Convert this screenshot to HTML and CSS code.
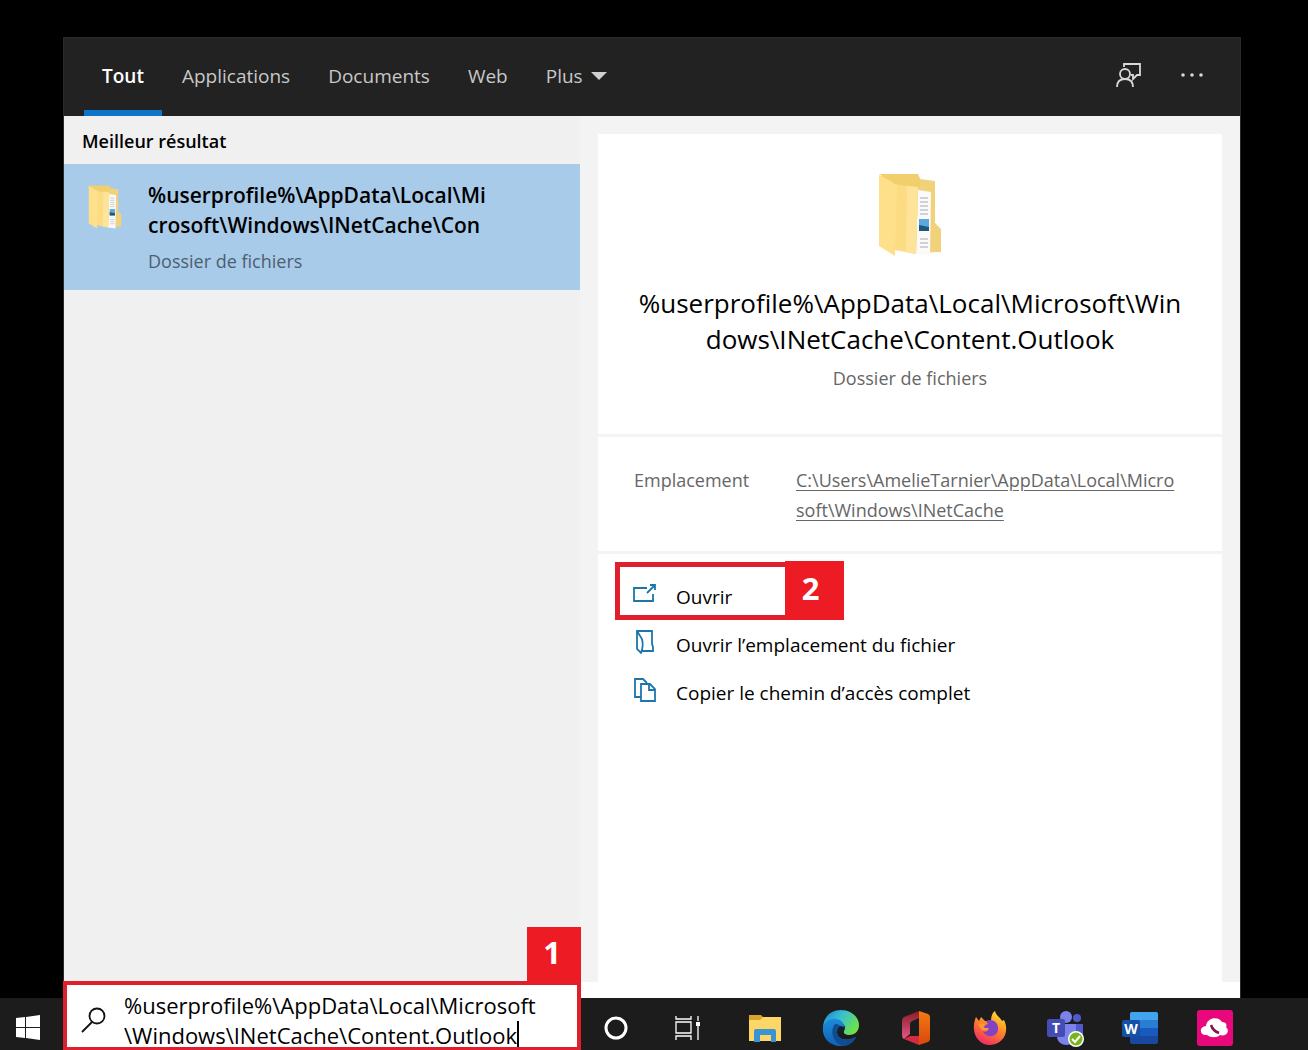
FILE: index.html
```html
<!DOCTYPE html>
<html lang="fr">
<head>
    <meta charset="UTF-8">
    <meta name="viewport" content="width=device-width, initial-scale=1.0">
    <title>Recherche Windows</title>
    <link rel="stylesheet" href="styles.css">
</head>
<body>
    <!-- Folder drawing shared by the result and the details -->
    <svg class="defs" aria-hidden="true">
        <symbol id="folder" viewBox="0 0 64 84">
            <path d="M2 3 L40 2 L42 6 L57 8 L57 50 L63 56 L63 79 L36 80 L2 72Z" fill="#f1d27a"/>
            <path d="M40 17 L53 19 L52 83 L38 81Z" fill="#fafafa"/>
            <path d="M42 25h8M42 29h8M42 33h8M42 37h8M42 41h8M42 66h8M42 70h8M42 74h8" stroke="#a5a9b0" stroke-width="1"/>
            <path d="M41 46h10v12h-10z" fill="#5aa9dd"/>
            <path d="M41 52l10 2v4h-10z" fill="#1f567f"/>
            <path d="M16 12 L40 14 L38 81 L17 77Z" fill="#fbdc83"/>
            <path d="M29 13 L40 14 L38 81 L28 79Z" fill="#fde499"/>
            <path d="M1 2 L19 11 L17 83 L1 73Z" fill="#ffe08a"/>
            <path d="M1 1 L40 1 L42 6 L42 14 L17 11Z" fill="#f2cf6d"/>
        </symbol>
    </svg>

    <main class="search-window">
        <header class="topbar">
            <nav class="tabs">
                <button class="tab active">Tout</button>
                <button class="tab">Applications</button>
                <button class="tab">Documents</button>
                <button class="tab">Web</button>
                <button class="tab">Plus <span class="arrow"></span></button>
            </nav>
            <div class="tools">
                <button class="tool" aria-label="Commentaires">
                    <svg width="26" height="26" viewBox="0 0 26 26" fill="none" stroke="#d8d8d8" stroke-width="1.8">
                        <path d="M8 5V2h16v11h-3l-4 4v-4h-2"/>
                        <circle cx="9" cy="12" r="5"/>
                        <path d="M1 25c0-5 3-8 8-8s8 3 8 8"/>
                    </svg>
                </button>
                <button class="tool" aria-label="Options">
                    <svg width="26" height="26" viewBox="0 0 26 26" fill="#d8d8d8">
                        <circle cx="4" cy="13" r="1.8"/><circle cx="13" cy="13" r="1.8"/><circle cx="22" cy="13" r="1.8"/>
                    </svg>
                </button>
            </div>
        </header>

        <div class="content">
            <section class="results">
                <h2>Meilleur résultat</h2>
                <button class="result">
                    <svg class="result-icon"><use href="#folder"/></svg>
                    <span>
                        <strong>%userprofile%\AppData\Local\Mi<br>crosoft\Windows\INetCache\Con</strong>
                        <small>Dossier de fichiers</small>
                    </span>
                </button>
            </section>

            <section class="details">
                <div class="card summary">
                    <svg class="summary-icon"><use href="#folder"/></svg>
                    <h1>%userprofile%\AppData\Local\Microsoft\Win<br>dows\INetCache\Content.Outlook</h1>
                    <p>Dossier de fichiers</p>
                </div>
                <div class="card location">
                    <span>Emplacement</span>
                    <a href="#">C:\Users\AmelieTarnier\AppData\Local\Micro<br>soft\Windows\INetCache</a>
                </div>
                <div class="card actions">
                    <button class="action">
                        <svg width="26" height="26" viewBox="0 0 26 26" fill="none" stroke="#1c76ae" stroke-width="1.8">
                            <path d="M15 6H2v13h19v-7M15 11l8-8M18 3h5v5"/>
                        </svg>
                        Ouvrir
                    </button>
                    <button class="action">
                        <svg width="26" height="26" viewBox="0 0 26 26" fill="none" stroke="#1c76ae" stroke-width="1.8">
                            <path d="M9 21h12v-4l-1-3V1H5v18l4 4c2-5 2-10 1-14L5 1"/>
                        </svg>
                        Ouvrir l’emplacement du fichier
                    </button>
                    <button class="action">
                        <svg width="26" height="26" viewBox="0 0 26 26" fill="none" stroke="#1c76ae" stroke-width="1.8">
                            <path d="M9 19H3V1h8l4 4M9 6h9l5 5v12H9zM17 6v6h6"/>
                        </svg>
                        Copier le chemin d’accès complet
                    </button>
                    <div class="callout"><span class="badge">2</span></div>
                </div>
            </section>
        </div>
    </main>

    <footer class="taskbar">
        <button class="start" aria-label="Démarrer">
            <svg width="24" height="26" viewBox="0 0 24 26" fill="#fff">
                <path d="M0 3l9-1v10H0zM10 2l14-2v12H10zM0 13h9v10l-9-1zM10 13h14v12l-14-2z"/>
            </svg>
        </button>
        <div class="searchbox">
            <svg width="26" height="26" viewBox="0 0 26 26" fill="none" stroke="#111" stroke-width="1.8">
                <circle cx="16" cy="9" r="7.5"/><path d="M11 15L1 25"/>
            </svg>
            <textarea aria-label="Rechercher" rows="2" spellcheck="false">%userprofile%\AppData\Local\Microsoft
\Windows\INetCache\Content.Outlook</textarea>
            <span class="caret"></span>
            <span class="badge">1</span>
        </div>
        <nav class="apps">
            <button aria-label="Cortana">
                <svg width="38" height="38" viewBox="0 0 38 38" fill="none">
                    <circle cx="19" cy="19" r="10" stroke="#fff" stroke-width="3"/>
                </svg>
            </button>
            <button aria-label="Affichage des tâches">
                <svg width="38" height="38" viewBox="0 0 38 38" fill="none" stroke="#fff" stroke-width="1.3">
                    <path d="M4 13h15v11H4zM4 7v3h15V7M4 31v-4h15v4M26 7v5M26 17v14"/>
                    <path d="M24 13h4v4h-4z" fill="#fff" stroke="none"/>
                </svg>
            </button>
            <button aria-label="Explorateur de fichiers">
                <svg width="38" height="38" viewBox="0 0 38 38">
                    <path d="M2 6h12l3 3h17v7H2z" fill="#dba32a"/>
                    <path d="M2 11h11l3-3h18v24H2z" fill="#fcd667"/>
                    <path d="M7 33V22q0-2 2-2h18q2 0 2 2v11h-5v-7H13v7z" fill="#3b94d2"/>
                </svg>
            </button>
            <button aria-label="Edge">
                <svg width="38" height="38" viewBox="0 0 38 38">
                    <defs>
                        <linearGradient id="edge1" x2="1" y2=".5"><stop stop-color="#1684d8"/><stop offset=".5" stop-color="#38bfd2"/><stop offset="1" stop-color="#6be04e"/></linearGradient>
                        <linearGradient id="edge2" x2="0" y2="1"><stop stop-color="#1b8ddc"/><stop offset="1" stop-color="#1260b4"/></linearGradient>
                    </defs>
                    <path d="M1 19C1 8 9 1 19 1s18 7 18 15c0 7-5 10-10 10-4 0-6-2-5-4 2-3 1-8-4-8C9 13 3 16 1 23z" fill="url(#edge1)"/>
                    <path d="M1 19C3 11 10 9 15 10c5 1 8 5 7 10-2-4-7-3-7 3 0 7 9 10 19 5-3 6-9 9-15 9C8 37 0 29 1 19z" fill="url(#edge2)"/>
                    <path d="M13 15c-5 6-3 19 8 22 6 0 11-4 13-9-10 5-19 2-19-5 0-3 2-5 4-5-2-3-4-3-6-3z" fill="#104c91"/>
                    <path d="M19 17c-3 1-4 4-3 7l6-1c-1-2 1-3 0-5z" fill="#14202b"/>
                </svg>
            </button>
            <button aria-label="Office">
                <svg width="38" height="38" viewBox="0 0 38 38">
                    <defs>
                        <linearGradient id="off1" x2="0" y2="1"><stop stop-color="#f47a12"/><stop offset="1" stop-color="#d8480c"/></linearGradient>
                        <linearGradient id="off2" x2="0" y2="1"><stop stop-color="#8c1d22"/><stop offset="1" stop-color="#e4578a"/></linearGradient>
                    </defs>
                    <path d="M5 12q0-3 2-4L22 2v7l-7 3q-2 1-2 3v10l-6 5q-2-1-2-4z" fill="url(#off2)"/>
                    <path d="M7 30l6-3h9v9z" fill="#d32c40"/>
                    <path d="M22 2l9 3q2 1 2 3v22q0 2-2 3l-9 3z" fill="url(#off1)"/>
                </svg>
            </button>
            <button aria-label="Firefox">
                <svg width="38" height="38" viewBox="0 0 38 38">
                    <defs>
                        <linearGradient id="fox" x1=".8" x2=".3" y2="1"><stop stop-color="#ffe63b"/><stop offset=".45" stop-color="#ff8a25"/><stop offset="1" stop-color="#f02866"/></linearGradient>
                    </defs>
                    <path d="M5 8l3 4 2-4 4 4 6 0c0-4 1-8 4-10 1 5 5 6 7 10l2-1c6 12-1 25-14 25S-1 22 5 8z" fill="url(#fox)"/>
                    <path d="M15 12c6-3 13 1 12 9-1 8-13 8-15 1 3 2 5 0 5-2h-4c-1-3 0-4 4-5z" fill="#8341c4"/>
                    <path d="M7 15c3-2 6 0 8 1l-3 2c2 1 3 1 6 1-1 3-4 3-7 2z" fill="#ff9830"/>
                </svg>
            </button>
            <button aria-label="Teams">
                <svg width="38" height="38" viewBox="0 0 38 38">
                    <circle cx="31" cy="9" r="4" fill="#5059c9"/><circle cx="20" cy="8" r="6" fill="#7b83eb"/>
                    <path d="M25 15h12v10c0 5-5 8-9 7z" fill="#5059c9"/>
                    <path d="M11 15h19v12c0 12-19 12-19 0z" fill="#7b83eb"/>
                    <rect x="1" y="10" width="18" height="18" rx="2" fill="#444db3"/>
                    <text x="10" y="24" class="logo-letter">T</text>
                    <circle cx="30" cy="30" r="8" fill="#fff"/><circle cx="30" cy="30" r="6.5" fill="#78b51b"/>
                    <path d="M26 30l3 3 5-6" fill="none" stroke="#fff" stroke-width="2"/>
                </svg>
            </button>
            <button aria-label="Word">
                <svg width="38" height="38" viewBox="0 0 38 38">
                    <rect x="9" y="3" width="28" height="32" rx="2" fill="#1848a0"/>
                    <path d="M9 11V5q0-2 2-2h24q2 0 2 2v6z" fill="#42a4ec"/>
                    <path d="M9 11h28v8H9z" fill="#2b7cd3"/><path d="M9 19h28v8H9z" fill="#185abd"/>
                    <rect x="1" y="11" width="18" height="17" rx="2" fill="#1450a8"/>
                    <text x="10" y="25" class="logo-letter">W</text>
                </svg>
            </button>
            <button aria-label="Téléphone cloud">
                <svg width="38" height="38" viewBox="0 0 38 38">
                    <rect x="1" y="1" width="36" height="36" rx="3" fill="#e8087c"/>
                    <path d="M11 26C3 27 3 17 10 17c1-9 13-10 16-4 5 0 5 4 4 5 5 5-1 10-6 8-3 3-9 3-13 0z" fill="#fff"/>
                    <path d="M15 16q2 6 8 8" fill="none" stroke="#7d174f" stroke-width="2.5"/>
                </svg>
            </button>
        </nav>
    </footer>
</body>
</html>
```

FILE: styles.css
```css
* {
    box-sizing: border-box;
}

body {
    margin: 0;
    min-height: 100vh;
    display: flex;
    flex-direction: column;
    background-color: #000;
    color: #000;
    font-family: "Open Sans", "Noto Sans", sans-serif;
    font-size: 19px;
    line-height: 30px;
}

h1, h2, p {
    margin: 0;
}

button {
    padding: 0;
    border: none;
    background: none;
    color: inherit;
    font: inherit;
    cursor: pointer;
}

svg {
    display: block;
    flex-shrink: 0;
}

.defs {
    position: absolute;
    width: 0;
    height: 0;
}

/* Search window */
.search-window {
    flex: 1;
    display: flex;
    flex-direction: column;
    margin: 37px 67px 0 63px;
    border: 1px solid #2b2b2b;
    border-bottom: none;
}

.topbar {
    display: flex;
    justify-content: space-between;
    height: 78px;
    padding: 0 35px 0 20px;
    background-color: #222;
}

.tabs {
    display: flex;
    gap: 2px;
}

.tab {
    display: flex;
    align-items: center;
    gap: 8px;
    padding: 6px 18px 2px;
    border-bottom: 6px solid transparent;
    color: #c8c8c8;
}

.tab.active {
    border-bottom-color: #0f74c8;
    color: #fff;
    font-weight: 600;
}

.arrow {
    border: 8px solid transparent;
    border-top-color: #d0d0d0;
    border-bottom: none;
}

.tools {
    display: flex;
    align-items: center;
    gap: 37px;
    padding-bottom: 4px;
}

.content {
    flex: 1;
    display: flex;
    background-color: #f3f3f3;
    border-bottom: 16px solid #fff;
}

/* Left side */
.results {
    flex: 0 0 516px;
    background-color: #f0f0f0;
}

.results h2 {
    padding: 10px 18px 8px;
    font-size: 18px;
    font-weight: 600;
}

.result {
    display: flex;
    gap: 26px;
    width: 100%;
    padding: 16px 24px 14px;
    background-color: #a9cbea;
    text-align: left;
}

.result-icon {
    width: 34px;
    height: 44px;
    margin-top: 5px;
}

.result strong {
    display: block;
    font-size: 21px;
    font-weight: 600;
}

.result small {
    display: block;
    margin-top: 6px;
    color: #4c5f70;
    font-size: 18px;
}

/* Right side */
.details {
    flex: 1;
    display: flex;
    flex-direction: column;
    gap: 3px;
    padding: 18px 18px 0;
}

.card {
    background-color: #fff;
}

.summary {
    display: flex;
    flex-direction: column;
    align-items: center;
    padding: 39px 18px 41px;
    text-align: center;
}

.summary-icon {
    width: 64px;
    height: 84px;
}

.summary h1 {
    margin-top: 28px;
    font-size: 26px;
    font-weight: 400;
    line-height: 36px;
}

.summary p {
    margin-top: 6px;
    color: #666;
    font-size: 18px;
}

.location {
    display: flex;
    padding: 28px 36px 26px;
    color: #666;
    font-size: 18px;
}

.location span {
    width: 162px;
}

.location a {
    color: inherit;
    text-underline-offset: 3px;
}

.actions {
    position: relative;
    flex: 1;
    padding-top: 18px;
}

.action {
    display: flex;
    gap: 18px;
    width: 100%;
    height: 48px;
    padding: 10px 34px 8px;
    text-align: left;
}

/* Numbered steps */
.callout {
    position: absolute;
    top: 8px;
    left: 17px;
    width: 229px;
    height: 58px;
    border: 5px solid #df1f2b;
    pointer-events: none;
}

.badge {
    position: absolute;
    color: #fff;
    background-color: #ed1c24;
    font-size: 31px;
    font-weight: 700;
    text-align: center;
}

.callout .badge {
    top: -6px;
    right: -5px;
    width: 59px;
    height: 59px;
    padding: 12px 8px 0 0;
}

.searchbox .badge {
    right: -4px;
    bottom: 64px;
    width: 54px;
    height: 56px;
    padding: 10px 4px 0 0;
}

/* Taskbar */
.taskbar {
    display: flex;
    align-items: flex-end;
    height: 52px;
    background-color: #1c1c1c;
}

.start {
    width: 63px;
    padding: 0 16px 9px;
}

.searchbox {
    position: relative;
    display: flex;
    align-items: center;
    gap: 17px;
    width: 518px;
    height: 69px;
    padding: 8px 14px 0;
    border: 4px solid #df1f2b;
    border-bottom-width: 3px;
    background-color: #fff;
}

.searchbox textarea {
    flex: 1;
    height: 60px;
    padding: 0;
    border: none;
    outline: none;
    resize: none;
    overflow: hidden;
    background: none;
    font: inherit;
    font-size: 22px;
    line-height: 30px;
}

.caret {
    position: absolute;
    left: 450px;
    bottom: 0;
    width: 2px;
    height: 26px;
    background-color: #000;
}

.apps {
    flex: 1;
    display: flex;
    justify-content: space-between;
    padding: 0 74px 3px 16px;
}

.logo-letter {
    fill: #fff;
    font-size: 14px;
    font-weight: 700;
    text-anchor: middle;
}
```
